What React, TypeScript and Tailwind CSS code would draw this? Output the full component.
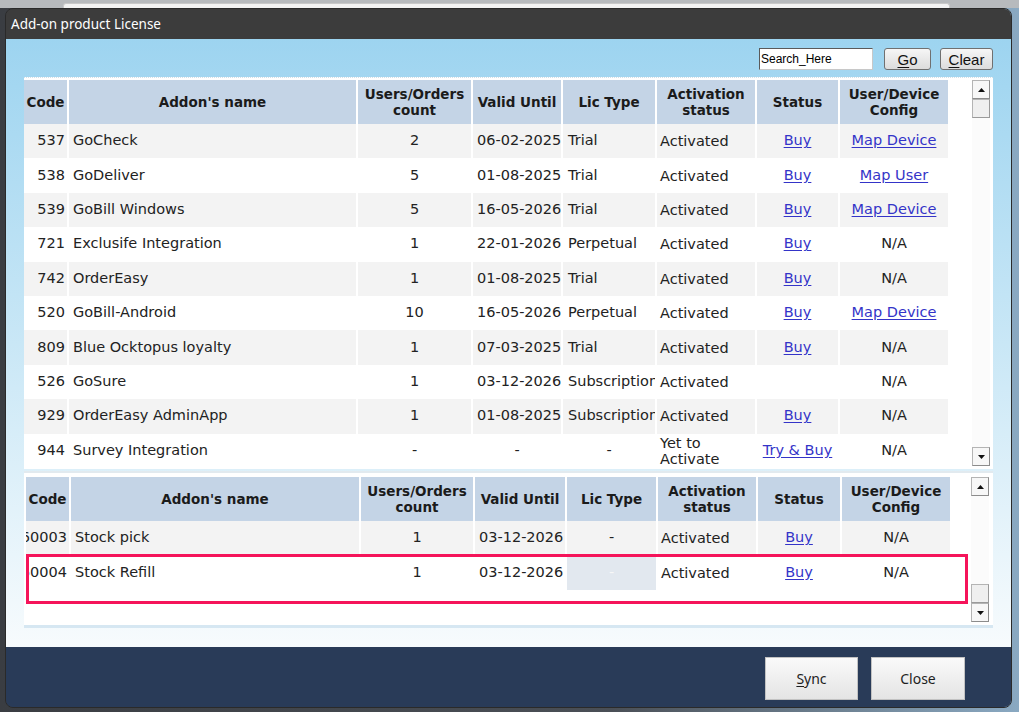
import React from 'react';

const COLS = 'grid grid-cols-[45px_289px_115px_90px_94px_100px_83px_110px]';
const COLS2 = 'grid grid-cols-[45px_290px_114px_92px_91px_100px_84px_110px]';

type RowData = [string, string, string, string, string, string, string, string];

const TOP_ROWS: RowData[] = [
  ['537', 'GoCheck', '2', '06-02-2025', 'Trial', 'Activated', 'Buy', 'Map Device'],
  ['538', 'GoDeliver', '5', '01-08-2025', 'Trial', 'Activated', 'Buy', 'Map User'],
  ['539', 'GoBill Windows', '5', '16-05-2026', 'Trial', 'Activated', 'Buy', 'Map Device'],
  ['721', 'Exclusife Integration', '1', '22-01-2026', 'Perpetual', 'Activated', 'Buy', 'N/A'],
  ['742', 'OrderEasy', '1', '01-08-2025', 'Trial', 'Activated', 'Buy', 'N/A'],
  ['520', 'GoBill-Android', '10', '16-05-2026', 'Perpetual', 'Activated', 'Buy', 'Map Device'],
  ['809', 'Blue Ocktopus loyalty', '1', '07-03-2025', 'Trial', 'Activated', 'Buy', 'N/A'],
  ['526', 'GoSure', '1', '03-12-2026', 'Subscription', 'Activated', '', 'N/A'],
  ['929', 'OrderEasy AdminApp', '1', '01-08-2025', 'Subscription', 'Activated', 'Buy', 'N/A'],
  ['944', 'Survey Integration', '-', '-', '-', 'Yet to Activate', 'Try & Buy', 'N/A'],
];

const BOTTOM_ROWS: RowData[] = [
  ['60003', 'Stock pick', '1', '03-12-2026', '-', 'Activated', 'Buy', 'N/A'],
  ['60004', 'Stock Refill', '1', '03-12-2026', '-', 'Activated', 'Buy', 'N/A'],
];

const cell = 'flex items-center overflow-hidden whitespace-nowrap border-r-2 border-white';
const link = 'text-[#3434c8] underline underline-offset-2';

function Header({ cols }: { cols: string }) {
  const heads: React.ReactNode[] = [
    'Code',
    "Addon's name",
    <>Users/Orders<br />count</>,
    'Valid Until',
    'Lic Type',
    <>Activation<br />status</>,
    'Status',
    <>User/Device<br />Config</>,
  ];
  return (
    <div className={`${cols} h-[44px]`}>
      {heads.map((h, i) => (
        <div
          key={i}
          className="flex items-center justify-center overflow-hidden whitespace-nowrap border-r-2 border-white bg-[#c4d4e6] text-center text-[13.5px] font-bold leading-[16px] text-[#1b1b1b]"
        >
          <span>{h}</span>
        </div>
      ))}
    </div>
  );
}

function Row({ r, cols, shade, licShade }: { r: RowData; cols: string; shade: boolean; licShade?: boolean }) {
  const bg = shade ? 'bg-[#f3f3f3]' : 'bg-white';
  const dash = (v: string) => v === '-';
  return (
    <div className={`${cols} h-[34.4px] text-[14.5px] text-[#222]`}>
      <div className={`${cell} ${bg} justify-end pr-[2px]`}>
        <span className="shrink-0">{r[0]}</span>
      </div>
      <div className={`${cell} ${bg} pl-[4px]`}>{r[1]}</div>
      <div className={`${cell} ${bg} justify-center`}>{r[2]}</div>
      <div className={`${cell} ${bg} ${dash(r[3]) ? 'justify-center' : 'pl-[4px]'}`}>{r[3]}</div>
      <div
        className={`${cell} ${licShade ? 'bg-[#e2e8ef] text-[#f7f7f7]' : bg} ${dash(r[4]) ? 'justify-center' : 'pl-[5px]'}`}
      >
        {r[4]}
      </div>
      <div className={`flex items-center overflow-hidden border-r-2 border-white ${bg} pl-[3px] leading-[16px]`}>
        {r[5]}
      </div>
      <div className={`${cell} ${bg} justify-center`}>
        {r[6] && <span className={link}>{r[6]}</span>}
      </div>
      <div className={`${cell} ${bg} justify-center`}>
        {r[7] === 'N/A' ? r[7] : <span className={link}>{r[7]}</span>}
      </div>
    </div>
  );
}

function Arrow({ up }: { up?: boolean }) {
  return (
    <div className="flex h-[19px] w-[18px] shrink-0 items-center justify-center border border-[#b4b4b4] border-r-[#8c8c8c] border-b-[#8c8c8c] bg-[#f7f7f7]">
      <svg width="7" height="4" viewBox="0 0 7 4">
        <path d={up ? 'M0 4 L3.5 0 L7 4 Z' : 'M0 0 L7 0 L3.5 4 Z'} fill="#111" />
      </svg>
    </div>
  );
}

function Thumb() {
  return <div className="h-[19px] w-[18px] shrink-0 border border-[#b4b4b4] border-r-[#9a9a9a] border-b-[#9a9a9a] bg-[#efefef]" />;
}

function ScrollBar({ height, thumbEnd }: { height: string; thumbEnd?: boolean }) {
  return (
    <div className={`flex w-[18px] flex-col ${height}`}>
      <Arrow up />
      {!thumbEnd && <Thumb />}
      <div className="flex-1 bg-[#fbfbfb]" />
      {thumbEnd && <Thumb />}
      <Arrow />
    </div>
  );
}

export default function App() {
  return (
    <div className="h-[712px] w-[1019px] overflow-hidden bg-[linear-gradient(90deg,#3a3d42_0%,#4a4f56_60%,#8aa9c2_100%)] font-['DejaVu_Sans',Verdana,sans-serif]">
      {/* desktop behind the dialog */}
      <div className="flex h-[8px] bg-[#b7babd]">
        <div className="ml-[63px] mt-[3px] h-[5px] w-[887px] rounded-t-[3px] border border-b-0 border-[#c9c9c9] bg-[#f3f3f3]" />
      </div>

      <div className="ml-[5px] flex h-[700px] w-[1007px] flex-col overflow-hidden rounded-[8px] border border-[#2a2a2a]">
        <div className="flex h-[30px] shrink-0 items-center bg-[#3c3c3c] pl-[5px] font-['Noto_Sans',sans-serif] text-[13.5px] text-white">
          Add-on product License
        </div>

        <div className="flex h-[608px] shrink-0 flex-col bg-gradient-to-b from-[#9dd4f0] via-[#c9e7f6] to-[#f7fbfd] px-[18px]">
          <div className="mt-[9px] flex h-[22px] items-center justify-end font-['Liberation_Sans',Arial,sans-serif]">
            <div className="flex h-[22px] w-[114px] items-center border border-[#5a5a5a] border-r-[#c8c8c8] border-b-[#c8c8c8] bg-white pl-[1px] text-[12px] text-black">
              Search_Here
            </div>
            <button className="ml-[11px] h-[22px] w-[47px] rounded-[3px] border border-[#707070] bg-gradient-to-b from-[#f6f6f6] to-[#dcdcdc] text-[15px] text-[#111]">
              <span className="underline underline-offset-2">G</span>o
            </button>
            <button className="ml-[9px] h-[22px] w-[53px] rounded-[3px] border border-[#707070] bg-gradient-to-b from-[#f6f6f6] to-[#dcdcdc] text-[15px] text-[#111]">
              <span className="underline underline-offset-2">C</span>lear
            </button>
          </div>

          {/* upper grid */}
          <div className="mt-[7px] flex h-[392px] shrink-0 justify-between overflow-hidden border-t border-dotted border-[#d3e0e8] bg-white pt-[2px]">
            <div>
              <Header cols={COLS} />
              {TOP_ROWS.map((r, i) => (
                <Row key={r[0]} r={r} cols={COLS} shade={i % 2 === 0} />
              ))}
            </div>
            <div className="mr-[3px]">
              <ScrollBar height="h-[386px]" />
            </div>
          </div>

          {/* lower grid */}
          <div className="relative mt-[2px] flex h-[157px] shrink-0 justify-between border-t-2 border-b-[3px] border-t-[#e2eaef] border-b-[#d6e7f2] bg-white pl-[2px] pt-[4px]">
            <div>
              <Header cols={COLS2} />
              <Row r={BOTTOM_ROWS[0]} cols={COLS2} shade />
              <Row r={BOTTOM_ROWS[1]} cols={COLS2} shade={false} licShade />
            </div>
            <div className="mr-[4px]">
              <ScrollBar height="h-[145px]" thumbEnd />
            </div>
            <div className="pointer-events-none absolute left-[2px] top-[81px] h-[50px] w-[942px] border-[3px] border-[#f5145a]" />
          </div>
        </div>

        <div className="flex h-[62px] shrink-0 items-start justify-end gap-[13px] bg-[#293b58] pr-[46px] pt-[10px] font-['Noto_Sans',sans-serif] text-[14px] text-[#1e1e1e]">
          <button className="h-[43px] w-[93px] border border-[#c2c2c2] bg-gradient-to-b from-[#fafafa] to-[#e4e4e4]">
            <span className="underline underline-offset-2">S</span>ync
          </button>
          <button className="h-[43px] w-[94px] border border-[#c2c2c2] bg-gradient-to-b from-[#fafafa] to-[#e4e4e4]">
            Close
          </button>
        </div>
      </div>
    </div>
  );
}
